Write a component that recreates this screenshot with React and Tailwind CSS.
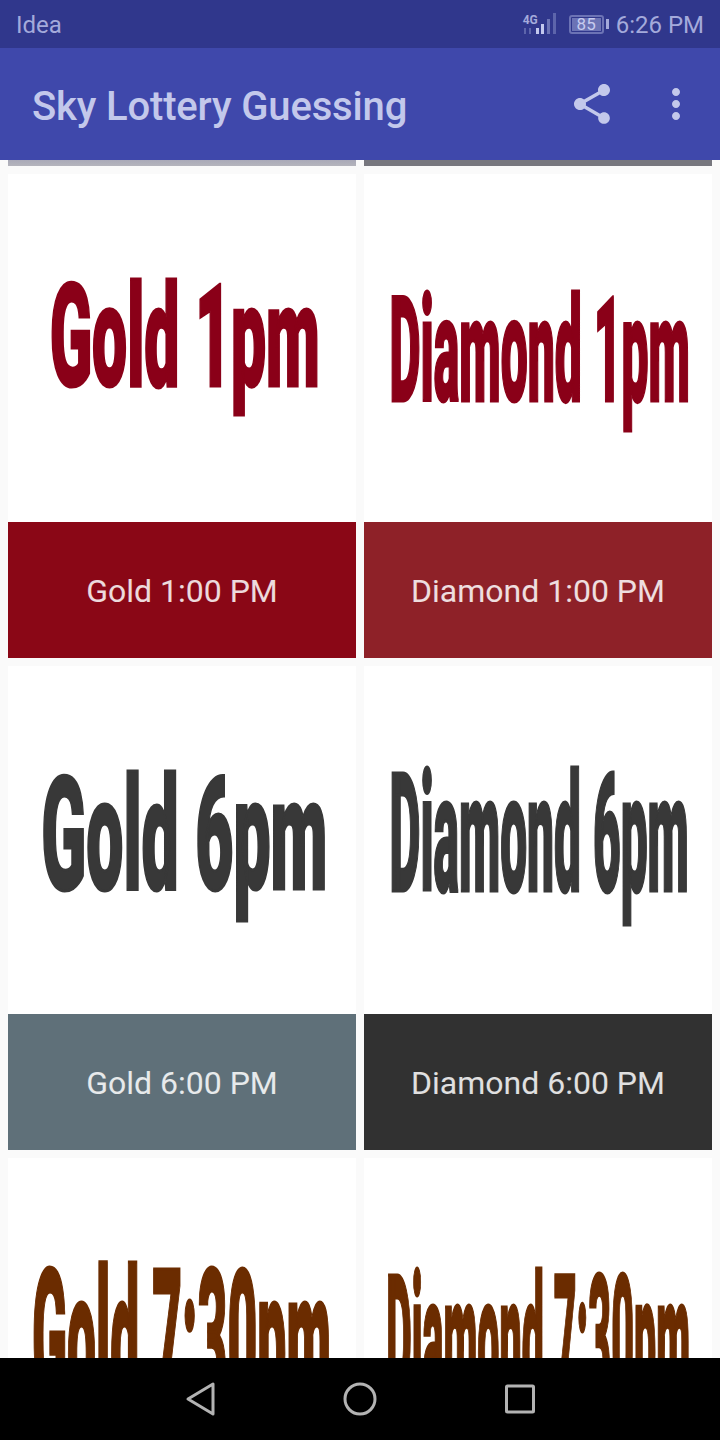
const font = "font-['Roboto',sans-serif]";

// the big titles are pictures in the app, squeezed heavy lettering
const items = [
  {
    logo: "Gold 1pm",
    logoClass: "text-[#8a0018] text-[142px] scale-x-[0.439] translate-x-[3px] -translate-y-[10px]",
    label: "Gold 1:00 PM",
    bar: "bg-[#8a0716]",
  },
  {
    logo: "Diamond 1pm",
    logoClass: "text-[#8a0018] text-[146px] scale-x-[0.329] translate-x-[2px] translate-y-[4px]",
    label: "Diamond 1:00 PM",
    bar: "bg-[#8e2128]",
  },
  {
    logo: "Gold 6pm",
    logoClass: "text-[#383838] text-[158px] scale-x-[0.418] translate-x-[2px] -translate-y-[5px]",
    label: "Gold 6:00 PM",
    bar: "bg-[#5f7079]",
  },
  {
    logo: "Diamond 6pm",
    logoClass: "text-[#383838] text-[165px] scale-x-[0.29] translate-x-[1px] -translate-y-[6px]",
    label: "Diamond 6:00 PM",
    bar: "bg-[#313131]",
  },
  // last row runs under the nav bar, its caption is never on screen
  {
    logo: "Gold 7:30pm",
    logoClass: "text-[#6b2c00] text-[190px] scale-x-[0.2716] translate-x-[-1px] translate-y-[7px]",
  },
  {
    logo: "Diamond 7:30pm",
    logoClass: "text-[#6b2c00] text-[175px] scale-x-[0.225] translate-y-[7px]",
  },
];

const StatusBar = () => (
  <div className={`h-12 shrink-0 bg-[#30378c] flex items-center justify-between pl-4 pr-4 text-[#a4aadb] ${font}`}>
    <span className="text-[24px] leading-none mt-[1px]">Idea</span>
    <div className="flex items-center">
      {/* network */}
      <div className="relative w-[36px] h-[24px] mr-[12px]">
        <span className="absolute left-[2px] top-[2px] text-[12px] font-bold leading-none">4G</span>
        <svg width="36" height="24" viewBox="0 0 36 24" className="absolute inset-0">
          <rect x="3" y="16" width="2" height="6" fill="#5d65ab" />
          <rect x="8" y="16" width="2" height="6" fill="#5d65ab" />
          <rect x="15" y="16" width="3" height="6" fill="#c3c8ee" />
          <rect x="20" y="12" width="3" height="10" fill="#c3c8ee" />
          <rect x="26" y="7" width="3" height="15" fill="#6c73b5" />
          <rect x="32" y="1" width="3" height="21" fill="#5d65ab" />
        </svg>
      </div>
      {/* battery */}
      <div className="w-[35px] h-[19px] border-2 border-[#6c73b5] rounded-[3px] p-[1px] flex">
        <div className="flex-1 bg-[#6c73b5] flex items-center justify-center text-[#c6cbef] text-[17px] leading-none">
          85
        </div>
      </div>
      <div className="w-[3px] h-[10px] bg-[#a4aadb] ml-[2px] mr-[7px]" />
      <span className="text-[24px] leading-none mt-[1px]">6:26 PM</span>
    </div>
  </div>
);

const AppBar = () => (
  <div className={`h-28 shrink-0 bg-[#3f48ab] flex items-center pl-8 pr-[20px] text-[#c3c8eb] ${font}`}>
    <h1 className="text-[40px] font-medium leading-none tracking-[-0.15px] flex-1 mt-[6px]">Sky Lottery Guessing</h1>
    <svg width="48" height="48" viewBox="0 0 24 24" fill="currentColor" className="mr-[36px]">
      <path d="M18 16.08c-.76 0-1.44.3-1.96.77L8.91 12.7c.05-.23.09-.46.09-.7s-.04-.47-.09-.7l7.05-4.11c.54.5 1.25.81 2.04.81 1.66 0 3-1.34 3-3s-1.34-3-3-3-3 1.34-3 3c0 .24.04.47.09.7L8.04 9.81C7.5 9.31 6.79 9 6 9c-1.66 0-3 1.34-3 3s1.34 3 3 3c.79 0 1.5-.31 2.04-.81l7.12 4.16c-.05.21-.08.43-.08.65 0 1.61 1.31 2.92 2.92 2.92s2.92-1.31 2.92-2.92-1.31-2.92-2.92-2.92z" />
    </svg>
    <svg width="48" height="48" viewBox="0 0 24 24" fill="currentColor">
      <path d="M12 8c1.1 0 2-.9 2-2s-.9-2-2-2-2 .9-2 2 .9 2 2 2zm0 2c-1.1 0-2 .9-2 2s.9 2 2 2 2-.9 2-2-.9-2-2-2zm0 6c-1.1 0-2 .9-2 2s.9 2 2 2 2-.9 2-2-.9-2-2-2z" />
    </svg>
  </div>
);

const Card = ({ item }) => (
  <div className="flex flex-col">
    <div className="h-[348px] bg-white flex items-center justify-center overflow-hidden">
      <span className={`whitespace-nowrap font-black leading-none [-webkit-text-stroke:3px_currentColor] ${font} ${item.logoClass}`}>
        {item.logo}
      </span>
    </div>
    {item.label && (
      <div className={`h-[136px] pt-[2px] flex items-center justify-center text-white/85 text-[32px] ${font} ${item.bar}`}>
        {item.label}
      </div>
    )}
  </div>
);

const NavBar = () => (
  <div className="h-[82px] shrink-0 bg-black flex items-center justify-center gap-[112px]">
    <svg width="48" height="48" viewBox="0 0 48 48" fill="none" stroke="#b3b3b3" strokeWidth="3" strokeLinejoin="round">
      <path d="M37 9v30L12 24z" />
    </svg>
    <svg width="48" height="48" viewBox="0 0 48 48" fill="none" stroke="#b3b3b3" strokeWidth="3">
      <circle cx="24" cy="24" r="15" />
    </svg>
    <svg width="48" height="48" viewBox="0 0 48 48" fill="none" stroke="#b3b3b3" strokeWidth="3" strokeLinejoin="round">
      <rect x="10.5" y="11" width="27" height="26" rx="1" />
    </svg>
  </div>
);

export default function App() {
  return (
    <div className="w-[720px] h-[1440px] flex flex-col overflow-hidden bg-[#fafafa]">
      <StatusBar />
      <AppBar />
      <div className="flex-1 overflow-hidden px-2">
        {/* bottom of the row scrolled away under the app bar */}
        <div className="grid grid-cols-2 gap-x-2 h-[6px]">
          <div className="bg-gradient-to-b from-[#a9a9b8] to-[#b4b4bc]" />
          <div className="bg-[#77777e]" />
        </div>
        <div className="grid grid-cols-2 gap-2 mt-2">
          {items.map((item) => (
            <Card key={item.logo} item={item} />
          ))}
        </div>
      </div>
      <NavBar />
    </div>
  );
}
